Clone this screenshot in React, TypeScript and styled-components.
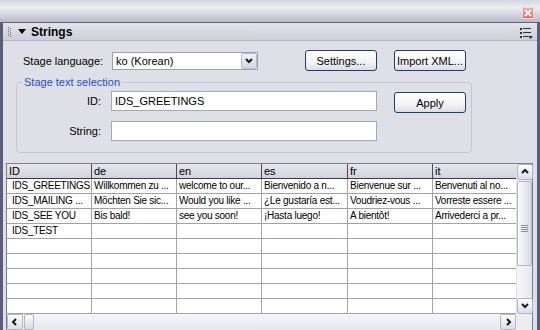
import React from 'react'
import styled, { createGlobalStyle } from 'styled-components'

const GlobalStyle = createGlobalStyle`
  html, body {
    margin: 0;
    padding: 0;
  }
  body {
    font-family: 'Liberation Sans', Arial, sans-serif;
    font-size: 11px;
    color: #000;
  }
  * {
    box-sizing: border-box;
  }
`

const columns = [
  { key: 'ID', width: 85 },
  { key: 'de', width: 85 },
  { key: 'en', width: 85 },
  { key: 'es', width: 86 },
  { key: 'fr', width: 85 },
  { key: 'it', width: 83 },
]

const rows = [
  ['IDS_GREETINGS', 'Willkommen zu ...', 'welcome to our...', 'Bienvenido a n...', 'Bienvenue sur ...', 'Benvenuti al no...'],
  ['IDS_MAILING ...', 'Möchten Sie sic...', 'Would you like ...', '¿Le gustaría est...', 'Voudriez-vous ...', 'Vorreste essere ...'],
  ['IDS_SEE YOU', 'Bis bald!', 'see you soon!', '¡Hasta luego!', 'A bientôt!', 'Arrivederci a pr...'],
  ['IDS_TEST', '', '', '', '', ''],
  ['', '', '', '', '', ''],
  ['', '', '', '', '', ''],
  ['', '', '', '', '', ''],
  ['', '', '', '', '', ''],
  ['', '', '', '', '', ''],
]

const Chevron = ({ dir }: { dir: 'up' | 'down' | 'left' | 'right' }) => {
  const pts = {
    up: '1,5 4,2 7,5',
    down: '1,2 4,5 7,2',
    left: '5,1 2,4 5,7',
    right: '3,1 6,4 3,7',
  }[dir]
  return (
    <svg width="8" height="8" viewBox="0 0 8 8">
      <polyline points={pts} fill="none" stroke="#1a1a1a" strokeWidth="2" />
    </svg>
  )
}

function App() {
  return (
    <>
      <GlobalStyle />
      <Window>
        <TitleBar>
          <CloseButton>
            <svg width="8" height="8" viewBox="0 0 8 8">
              <path d="M1 1 L7 7 M7 1 L1 7" stroke="#fff" strokeWidth="2" />
            </svg>
          </CloseButton>
        </TitleBar>
        <Frame>
          <PanelHeader>
            <Grip>
              <svg width="4" height="10" viewBox="0 0 4 10">
                {[0, 2, 4, 6, 8].map((y) => (
                  <React.Fragment key={y}>
                    <rect x="0" y={y} width="1" height="1" fill="#6e6e80" />
                    <rect x="2" y={y + 1} width="1" height="1" fill="#6e6e80" />
                  </React.Fragment>
                ))}
              </svg>
            </Grip>
            <svg width="8" height="6" viewBox="0 0 8 6">
              <polygon points="0,0 8,0 4,5" fill="#000" />
            </svg>
            <PanelTitle>Strings</PanelTitle>
            <MenuIcon>
              <svg width="13" height="11" viewBox="0 0 13 11">
                <rect x="0" y="0" width="2" height="2" fill="#333" />
                <rect x="3" y="0" width="8" height="1" fill="#333" />
                <rect x="0" y="4" width="2" height="2" fill="#333" />
                <rect x="3" y="4" width="8" height="1" fill="#333" />
                <rect x="0" y="8" width="2" height="2" fill="#333" />
                <rect x="3" y="8" width="5" height="1" fill="#333" />
                <polygon points="8,8 13,8 10.5,11" fill="#333" />
              </svg>
            </MenuIcon>
          </PanelHeader>

          <Content>
            <TopRow>
              <LangLabel>Stage language:</LangLabel>
              <Select>
                <SelectText>ko (Korean)</SelectText>
                <SelectArrow>
                  <Chevron dir="down" />
                </SelectArrow>
              </Select>
              <Button $ml={47}>Settings...</Button>
              <Button $ml={17}>Import XML...</Button>
            </TopRow>

            <Group>
              <Legend>Stage text selection</Legend>
              <FieldRow>
                <FieldLabel>ID:</FieldLabel>
                <TextInput>IDS_GREETINGS</TextInput>
                <Button $ml={17} $mt={1}>Apply</Button>
              </FieldRow>
              <FieldRow $mt={8}>
                <FieldLabel>String:</FieldLabel>
                <TextInput />
              </FieldRow>
            </Group>

            <Table>
              <TableMain>
                <Grid>
                  <HeaderRow>
                    {columns.map((c) => (
                      <HeaderCell key={c.key} $w={c.width}>
                        {c.key}
                      </HeaderCell>
                    ))}
                  </HeaderRow>
                  {rows.map((r, i) => (
                    <Row key={i}>
                      {r.map((v, j) => (
                        <Cell key={j} $w={columns[j].width} $first={j === 0}>
                          {v}
                        </Cell>
                      ))}
                    </Row>
                  ))}
                </Grid>
                <VScroll>
                  <ScrollButton>
                    <Chevron dir="up" />
                  </ScrollButton>
                  <VThumb>
                    <ThumbGrip />
                  </VThumb>
                  <ScrollButton>
                    <Chevron dir="down" />
                  </ScrollButton>
                </VScroll>
              </TableMain>
              <HScrollRow>
                <HScroll>
                  <ScrollButton>
                    <Chevron dir="left" />
                  </ScrollButton>
                  <HThumb />
                  <ScrollButton>
                    <Chevron dir="right" />
                  </ScrollButton>
                </HScroll>
                <Corner />
              </HScrollRow>
            </Table>
          </Content>
        </Frame>
      </Window>
    </>
  )
}

export default App

const Window = styled.div`
  width: 540px;
  height: 330px;
  display: flex;
  flex-direction: column;
  background: #dfe0e7;
  overflow: hidden;
`

const TitleBar = styled.div`
  height: 23px;
  flex: none;
  display: flex;
  justify-content: flex-end;
  align-items: flex-start;
  padding: 7px 6px 0 0;
  background: linear-gradient(#d6d6e0 0%, #ececf2 35%, #d2d2de 70%, #b8b8c9 100%);
  border-bottom: 1px solid #62647f;
`

const CloseButton = styled.div`
  width: 12px;
  height: 12px;
  display: flex;
  align-items: center;
  justify-content: center;
  background: linear-gradient(#f4a8a0, #e06a62);
  border: 1px solid #f8d8d4;
`

const Frame = styled.div`
  flex: 1;
  display: flex;
  flex-direction: column;
  border-left: 3px solid #5b5d7b;
  border-right: 3px solid #5b5d7b;
  border-bottom: 4px solid #5b5d7b;
  box-shadow: inset 0 -1px 0 #f0f0f4;
`

const PanelHeader = styled.div`
  height: 18px;
  flex: none;
  display: flex;
  align-items: center;
  padding-left: 5px;
  background: linear-gradient(#e3e3ea, #cdced8);
  border-bottom: 1px solid #b4b5c4;
`

const Grip = styled.div`
  display: flex;
  margin-right: 6px;
  margin-top: 1px;
`

const PanelTitle = styled.div`
  margin-left: 5px;
  font-size: 12px;
  font-weight: bold;
`

const MenuIcon = styled.div`
  margin-left: auto;
  margin-right: 4px;
  display: flex;
  margin-top: 4px;
`

const Content = styled.div`
  flex: 1;
  display: flex;
  flex-direction: column;
  padding-top: 9px;
`

const TopRow = styled.div`
  display: flex;
  align-items: center;
  padding-left: 20px;
  height: 21px;
`

const LangLabel = styled.div`
  width: 89px;
`

const Select = styled.div`
  width: 146px;
  height: 18px;
  display: flex;
  align-items: stretch;
  background: #fff;
  border: 1px solid #9aa3b8;
`

const SelectText = styled.div`
  flex: 1;
  padding-left: 3px;
  line-height: 16px;
`

const SelectArrow = styled.div`
  width: 16px;
  display: flex;
  align-items: center;
  justify-content: center;
  margin: 0;
  background: linear-gradient(#f2f3f7, #d6d8e2);
  border: 1px solid #b8bccb;
  border-radius: 2px;
`

const Button = styled.div<{ $ml?: number; $mt?: number }>`
  width: 72px;
  height: 21px;
  flex: none;
  margin-left: ${(p) => p.$ml ?? 0}px;
  margin-top: ${(p) => p.$mt ?? 0}px;
  display: flex;
  align-items: center;
  justify-content: center;
  white-space: nowrap;
  border: 1px solid #233f66;
  border-radius: 3px;
  background: linear-gradient(#ffffff 0%, #f3f3f6 60%, #dcdce4 100%);
`

const Group = styled.fieldset`
  margin: 4px 0 0 13px;
  width: 456px;
  padding: 2px 0 11px 0;
  border: 1px solid #c4c5d0;
  border-radius: 4px;
`

const Legend = styled.legend`
  margin-left: 5px;
  padding: 0 2px;
  line-height: 14px;
  color: #1d4fd0;
`

const FieldRow = styled.div<{ $mt?: number }>`
  display: flex;
  align-items: flex-start;
  margin-top: ${(p) => p.$mt ?? 0}px;
`

const FieldLabel = styled.div`
  width: 84px;
  margin-right: 10px;
  text-align: right;
  line-height: 20px;
`

const TextInput = styled.div`
  width: 266px;
  height: 20px;
  background: #fff;
  border: 1px solid #a3a9b8;
  padding-left: 3px;
  line-height: 18px;
`

const Table = styled.div`
  margin: 10px 4px 0 3px;
  flex: 1;
  display: flex;
  flex-direction: column;
  border: 1px solid #7d7e8c;
  background: #fff;
  min-height: 0;
`

const TableMain = styled.div`
  flex: 1;
  display: flex;
  min-height: 0;
`

const Grid = styled.div`
  flex: 1;
  overflow: hidden;
  font-size: 10px;
  letter-spacing: -0.25px;
`

const HeaderRow = styled.div`
  display: flex;
  height: 15px;
  border-bottom: 1px solid #3c3c44;
  background: linear-gradient(#e6e6ec, #d2d3dc);
`

const HeaderCell = styled.div<{ $w: number }>`
  width: ${(p) => p.$w}px;
  flex: none;
  padding-left: 2px;
  line-height: 14px;
  font-size: 11px;
  letter-spacing: 0;
  border-right: 1px solid #4a4a55;
  &:last-child {
    border-right: none;
  }
`

const Row = styled.div`
  display: flex;
  height: 15px;
  border-bottom: 1px solid #a2a2a8;
`

const Cell = styled.div<{ $w: number; $first: boolean }>`
  width: ${(p) => p.$w}px;
  flex: none;
  padding-left: ${(p) => (p.$first ? 5 : 2)}px;
  line-height: 14px;
  white-space: nowrap;
  overflow: hidden;
  border-right: 1px solid #a2a2a8;
  &:last-child {
    border-right: none;
  }
`

const VScroll = styled.div`
  width: 16px;
  flex: none;
  display: flex;
  flex-direction: column;
  background: linear-gradient(90deg, #f6f6f9, #e6e7ee);
  border-left: 1px solid #e0e0e8;
`

const ScrollButton = styled.div`
  width: 16px;
  height: 16px;
  flex: none;
  display: flex;
  align-items: center;
  justify-content: center;
  border: 1px solid #b2b5c6;
  border-radius: 2px;
  background: linear-gradient(#fdfdfe, #dcdde6);
`

const VThumb = styled.div`
  height: 85px;
  margin-top: 1px;
  margin-bottom: auto;
  display: flex;
  align-items: center;
  justify-content: center;
  border: 1px solid #b2b5c6;
  border-radius: 2px;
  background: linear-gradient(90deg, #fbfbfd, #d9dae4);
`

const ThumbGrip = styled.div`
  width: 7px;
  height: 7px;
  margin-top: 10px;
  background: repeating-linear-gradient(#8c8ea0 0 1px, transparent 1px 2px);
`

const HScrollRow = styled.div`
  display: flex;
  height: 17px;
  flex: none;
`

const HScroll = styled.div`
  flex: 1;
  display: flex;
  align-items: flex-start;
  background: linear-gradient(#f6f6f9, #e6e7ee);
  & > div:last-child {
    margin-left: auto;
  }
`

const HThumb = styled.div`
  width: 10px;
  height: 16px;
  margin-left: 1px;
  border: 1px solid #b2b5c6;
  border-radius: 2px;
  background: linear-gradient(#fbfbfd, #d9dae4);
`

const Corner = styled.div`
  width: 16px;
  background: #ececf1;
`
